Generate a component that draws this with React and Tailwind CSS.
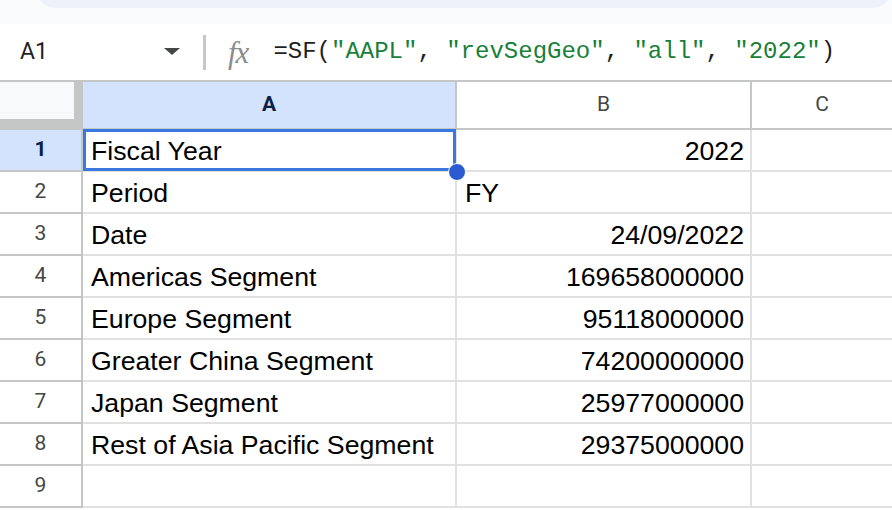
import React from "react";

const rows = [
  ["Fiscal Year", "2022", "r"],
  ["Period", "FY", "l"],
  ["Date", "24/09/2022", "r"],
  ["Americas Segment", "169658000000", "r"],
  ["Europe Segment", "95118000000", "r"],
  ["Greater China Segment", "74200000000", "r"],
  ["Japan Segment", "25977000000", "r"],
  ["Rest of Asia Pacific Segment", "29375000000", "r"],
  ["", "", "r"],
];

const cellFont = { fontFamily: '"Liberation Sans", Arial, sans-serif' };
const hdrFont = { fontFamily: 'Roboto, "Liberation Sans", sans-serif' };

export default function App() {
  return (
    <div className="w-[892px] h-[510px] overflow-hidden bg-white">
      {/* top strip */}
      <div className="h-[24px] bg-[#f9fbfd] overflow-hidden">
        <div className="h-[40px] -mt-[32px] ml-[36px] rounded-[24px] bg-[#edf2fa]" />
      </div>

      {/* formula bar */}
      <div className="h-[56px] flex items-center bg-white border-b-2 border-[#c4c7c5] box-content">
        <div className="w-[203px] flex items-center justify-between pl-[20px] pr-[23px]">
          <span className="text-[23px] text-[#1f1f1f]" style={hdrFont}>A1</span>
          <svg width="16" height="8" viewBox="0 0 16 8">
            <polygon points="0,0 16,0 8,7" fill="#444746" />
          </svg>
        </div>
        <div className="w-[3px] h-[35px] bg-[#c7c7c7]" />
        <span
          className="ml-[22px] text-[31px] italic text-[#8a8d90] leading-none tracking-[-1px]"
          style={{ fontFamily: '"Liberation Serif", "Times New Roman", serif' }}
        >
          fx
        </span>
        <span
          className="ml-[25px] text-[24px] whitespace-pre text-[#1f1f1f]"
          style={{ fontFamily: '"Liberation Mono", "DejaVu Sans Mono", monospace' }}
        >
          =SF(<span className="text-[#188038]">"AAPL"</span>, <span className="text-[#188038]">"revSegGeo"</span>, <span className="text-[#188038]">"all"</span>, <span className="text-[#188038]">"2022"</span>)
        </span>
      </div>

      {/* header row */}
      <div className="flex h-[48px]">
        <div className="w-[83px] shrink-0 bg-[#c4c7c5] flex flex-col">
          <div className="w-[74px] h-[37px] bg-[#f8f9fa]" />
        </div>
        <div
          className="w-[374px] shrink-0 bg-[#d3e3fd] border-r-2 border-b-2 border-[#c4c7c5] flex items-center justify-center text-[21px] font-bold text-[#0b1f47]"
          style={hdrFont}
        >
          A
        </div>
        <div
          className="w-[295px] shrink-0 bg-white border-r-2 border-b-2 border-[#c4c7c5] flex items-center justify-center text-[21px] text-[#444746]"
          style={hdrFont}
        >
          B
        </div>
        <div
          className="flex-1 bg-white border-b-2 border-[#c4c7c5] flex items-center justify-center text-[21px] text-[#444746]"
          style={hdrFont}
        >
          C
        </div>
      </div>

      {/* body rows */}
      {rows.map(([a, b, align], i) => (
        <div key={i} className="flex h-[42px]">
          <div
            className={
              i === 0
                ? "w-[83px] shrink-0 bg-[#d3e3fd] border-r-2 border-b-2 border-[#c4c7c5] flex items-center justify-center text-[21px] font-bold text-[#0b1f47]"
                : "w-[83px] shrink-0 bg-white border-r-2 border-b-2 border-[#c4c7c5] flex items-center justify-center text-[21px] text-[#444746]"
            }
            style={hdrFont}
          >
            {i + 1}
          </div>
          <div
            className={
              (i === 0 ? "z-10 " : "") +
              "relative w-[374px] shrink-0 border-r-2 border-b-2 border-[#e1e1e1] flex items-center pl-[8px] pt-[2px] text-[26.7px] text-black"
            }
            style={cellFont}
          >
            {a}
            {i === 0 && (
              <>
                <div className="absolute left-0 top-[-1px] right-[-1px] bottom-[-1px] border-[3px] border-[#3b78de]" />
                <div className="absolute right-[-11px] bottom-[-11px] w-[18px] h-[18px] rounded-full bg-[#2a5bd0] border-[1.5px] border-white" />
              </>
            )}
          </div>
          <div
            className={
              (align === "r" ? "justify-end pr-[6px] " : "justify-start pl-[8px] ") +
              "w-[295px] shrink-0 border-r-2 border-b-2 border-[#e1e1e1] flex items-center pt-[2px] text-[26.7px] text-black"
            }
            style={cellFont}
          >
            {b}
          </div>
          <div className="flex-1 border-b-2 border-[#e1e1e1]" />
        </div>
      ))}
    </div>
  );
}
